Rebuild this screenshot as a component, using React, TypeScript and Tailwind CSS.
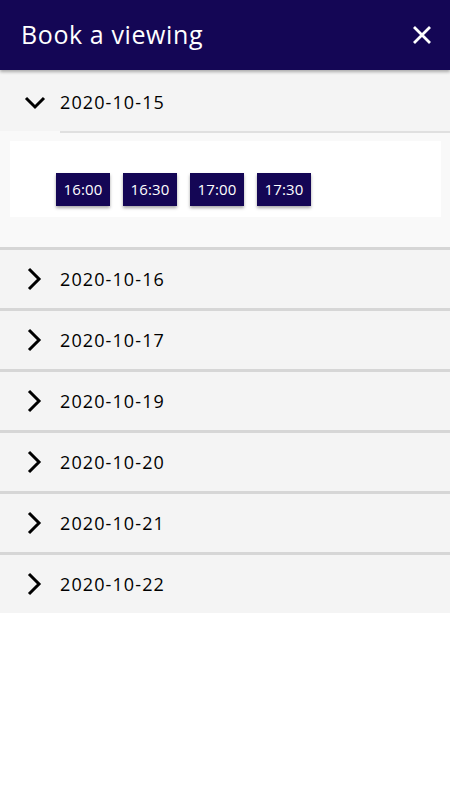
import { useState } from 'react'

const DATES = ['2020-10-15', '2020-10-16', '2020-10-17', '2020-10-19', '2020-10-20', '2020-10-21', '2020-10-22']
const TIMES = ['16:00', '16:30', '17:00', '17:30']

function Chevron({ open }: { open: boolean }) {
  return open ? (
    <svg width="24" height="16" viewBox="0 0 24 16" className="shrink-0">
      <path d="M3 4 L12 13 L21 4" fill="none" stroke="#000" strokeWidth="3" />
    </svg>
  ) : (
    <svg width="24" height="24" viewBox="0 0 24 24" className="shrink-0">
      <path d="M6 2 L16 12 L6 22" fill="none" stroke="#000" strokeWidth="3" />
    </svg>
  )
}

export default function App() {
  const [open, setOpen] = useState<string | null>('2020-10-15')

  return (
    <div className="min-h-[800px] bg-white font-['Open_Sans',sans-serif]">
      {/* Header */}
      <div className="relative z-10 h-[70px] bg-[#140655] flex items-center justify-between pl-[21px] pr-[18px] shadow-[0_2px_3px_rgba(0,0,0,0.3)]">
        <h1 className="text-white text-[25px] tracking-[0.6px]">Book a viewing</h1>
        <svg width="20" height="20" viewBox="0 0 20 20">
          <path d="M2 2 L18 18 M18 2 L2 18" stroke="#fff" strokeWidth="2.8" />
        </svg>
      </div>

      {DATES.map((d, i) => {
        const isOpen = open === d
        return (
          <div key={d} className={i > 0 ? 'border-t-[3px] border-[#d6d6d6]' : ''}>
            <button
              onClick={() => setOpen(isOpen ? null : d)}
              className={`w-full bg-[#f4f4f4] flex items-center text-left pl-[23px] ${i === 0 ? 'h-[61px] pt-[3px]' : 'h-[58px]'}`}
            >
              <span className="w-[37px] flex justify-start">
                <Chevron open={isOpen} />
              </span>
              <span className="text-[18px] text-black tracking-[1.1px]">{d}</span>
            </button>
            {isOpen && (
              <div className="bg-[#f9f9f9]">
                <div className="ml-[60px] h-[2px] bg-[#e0e0e0]" />
                <div className="pt-[8px] pb-[30px] pl-[10px] pr-[9px]">
                  <div className="bg-white h-[76px] pt-[32px] pl-[46px] flex gap-[13px]">
                    {TIMES.map((t) => (
                      <button
                        key={t}
                        className="h-[33px] w-[54px] bg-[#140655] text-white text-[15px] tracking-[0.2px] shadow-[0_2px_3px_rgba(0,0,0,0.35)]"
                      >
                        {t}
                      </button>
                    ))}
                  </div>
                </div>
              </div>
            )}
          </div>
        )
      })}
    </div>
  )
}
